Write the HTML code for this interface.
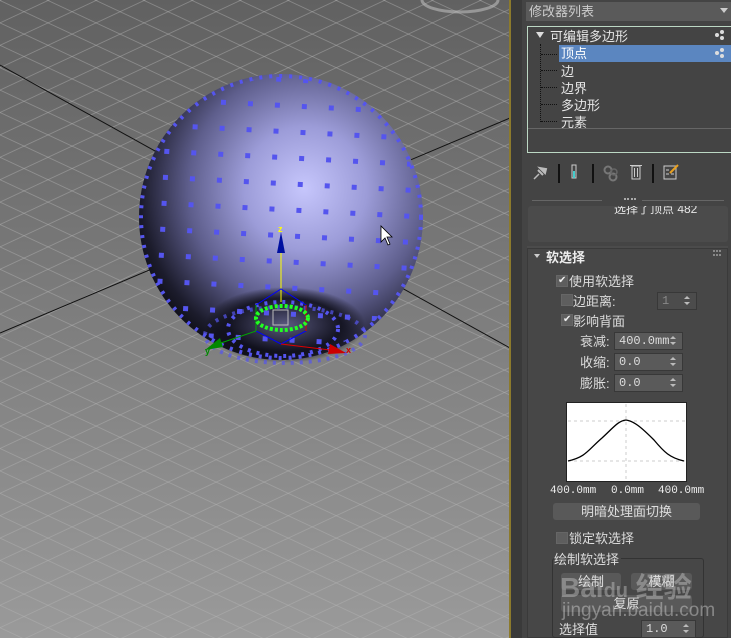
<!DOCTYPE html>
<html><head><meta charset="utf-8">
<style>
*{margin:0;padding:0;box-sizing:border-box}
body{width:731px;height:638px;overflow:hidden;background:#444;font-family:"Liberation Sans","Noto Sans CJK SC",sans-serif;font-size:12px;color:#ddd;position:relative}
.a{position:absolute;white-space:nowrap}
.cb{position:absolute;width:12px;height:12px;background:#5e5e5e;border:1px solid #666}
.ck{color:#eee;font-size:10px;line-height:10px;position:absolute;left:1px;top:0}
.sp{position:absolute;height:18px;background:#5a5a5a;border:1px solid #383838;color:#ddd;font-family:"Liberation Mono",monospace;font-size:12px;line-height:16px;padding-left:4px}
.sp:after{content:"";position:absolute;right:6px;top:3px;border:3px solid transparent;border-bottom:3px solid #bbb;border-top:0}
.sp:before{content:"";position:absolute;right:6px;top:9px;border:3px solid transparent;border-top:3px solid #bbb;border-bottom:0}
.btn{position:absolute;height:17px;background:#595959;border-radius:3px;color:#ddd;text-align:center;line-height:17px;font-size:13px}
</style></head><body>
<svg class="a" style="left:0;top:0" width="510" height="638" viewBox="0 0 510 638">
<defs>
<linearGradient id="bg" x1="0" y1="0" x2="0" y2="1"><stop offset="0" stop-color="#616161"/><stop offset="1" stop-color="#9a9a9a"/></linearGradient>
<pattern id="g1" width="48" height="22.4" patternUnits="userSpaceOnUse" patternTransform="skewY(25)"><line x1="0" y1="0.5" x2="48" y2="0.5" stroke="#b4b4b4" stroke-width="1"/></pattern>
<pattern id="g2" width="48" height="22.4" patternUnits="userSpaceOnUse" patternTransform="skewY(-25)"><line x1="0" y1="0.5" x2="48" y2="0.5" stroke="#b4b4b4" stroke-width="1"/></pattern>
<radialGradient id="sph" cx="0.6" cy="0.4" r="0.72" fx="0.58" fy="0.4"><stop offset="0" stop-color="#c6c6fc"/><stop offset="0.3" stop-color="#9c9cd8"/><stop offset="0.58" stop-color="#5e5e8c"/><stop offset="0.82" stop-color="#1c1c2c"/><stop offset="1" stop-color="#000"/></radialGradient>
<radialGradient id="bot" cx="0.5" cy="0.5" r="0.5"><stop offset="0" stop-color="#5a5a80"/><stop offset="0.7" stop-color="#10101c" stop-opacity="0.9"/><stop offset="1" stop-color="#000" stop-opacity="0"/></radialGradient>
<pattern id="dots" width="27" height="26" patternUnits="userSpaceOnUse" patternTransform="rotate(3)"><rect x="10" y="10" width="5" height="5" fill="#5555ee"/></pattern>
<clipPath id="cc"><ellipse cx="281" cy="217" rx="140" ry="140"/></clipPath>
</defs>
<rect width="510" height="638" fill="url(#bg)"/>
<rect width="510" height="638" fill="url(#g1)" opacity="0.45"/>
<rect width="510" height="638" fill="url(#g2)" opacity="0.45"/>
<line x1="0" y1="65" x2="510" y2="348" stroke="#111" stroke-width="1"/>
<line x1="510" y1="118" x2="0" y2="333" stroke="#111" stroke-width="1"/>
<ellipse cx="460" cy="0" rx="38" ry="12" fill="none" stroke="#bbb" stroke-width="3" opacity="0.6"/>
<ellipse cx="281" cy="217" rx="142" ry="143" fill="url(#sph)"/>
<ellipse cx="285" cy="325" rx="80" ry="38" fill="url(#bot)"/>
<g clip-path="url(#cc)"><rect x="130" y="70" width="310" height="300" fill="url(#dots)"/></g>
<ellipse cx="281" cy="217" rx="140" ry="141" fill="none" stroke="#5555ee" stroke-width="4" stroke-dasharray="3 7"/>
<ellipse cx="283" cy="329" rx="55" ry="27" fill="none" stroke="#5555ee" stroke-width="4" stroke-dasharray="3 6"/>
<ellipse cx="285" cy="335" rx="80" ry="28" fill="none" stroke="#5555ee" stroke-width="4" stroke-dasharray="3 6" opacity="0.7"/>
<line x1="281" y1="252" x2="281" y2="302" stroke="#ff0" stroke-width="1"/>
<polygon points="281,232 277,253 285,253" fill="#0010a0"/>
<text x="278" y="232" fill="#ff0" font-size="9" font-weight="bold" font-family="Liberation Sans">z</text>
<polyline points="256,305 281,289 306,305 306,331 281,344 256,331 256,305" fill="none" stroke="#00f"/>
<line x1="281" y1="344" x2="330" y2="350" stroke="#d00"/>
<line x1="256" y1="331" x2="215" y2="345" stroke="#0a0"/>
<line x1="306" y1="305" x2="306" y2="331" stroke="#d00"/>
<line x1="256" y1="305" x2="256" y2="331" stroke="#0a0"/>
<polygon points="330,344 346,353 328,354" fill="#c00"/>
<text x="346" y="353" fill="#c00" font-size="9" font-weight="bold">x</text>
<polygon points="220,338 205,350 223,347" fill="#080"/>
<text x="205" y="354" fill="#080" font-size="9" font-weight="bold">y</text>
<ellipse cx="282" cy="318" rx="26" ry="12" fill="none" stroke="#2f2" stroke-width="4" stroke-dasharray="3 2"/>
<rect x="273" y="310" width="15" height="15" fill="none" stroke="#bbb" stroke-width="1"/>
<path d="M381 226 L381 242 L385 238 L388 245 L390 244 L387 237 L392 237 Z" fill="#fff" stroke="#000" stroke-width="0.8"/>
</svg>
<div class="a" style="left:509px;top:0;width:2px;height:638px;background:#8c7a2c"></div>
<div class="a" style="left:511px;top:0;width:11px;height:638px;background:#3a3a3a"></div>
<!-- panel -->
<div class="a" style="left:526px;top:2px;width:205px;height:19px;background:#5a5a5a;color:#ccc;font-size:13px;line-height:19px;padding-left:3px">修改器列表</div>
<div class="a" style="left:720px;top:8px;border:4px solid transparent;border-top:5px solid #ccc"></div>
<div class="a" style="left:527px;top:26px;width:204px;height:127px;border:1px solid #bcd8c4;border-right:none;background:#444"></div>
<div class="a" style="left:536px;top:32px;border:4px solid transparent;border-top:6px solid #ddd"></div>
<div class="a" style="left:550px;top:26px;font-size:13px;color:#e6e6e6">可编辑多边形</div>
<div class="a" style="left:559px;top:45px;width:172px;height:17px;background:#5b86c0"></div>
<div class="a" style="left:561px;top:43px;font-size:13px;color:#fff">顶点</div>
<div class="a" style="left:561px;top:61px;font-size:13px;color:#e6e6e6">边</div>
<div class="a" style="left:561px;top:78px;font-size:13px;color:#e6e6e6">边界</div>
<div class="a" style="left:561px;top:95px;font-size:13px;color:#e6e6e6">多边形</div>
<div class="a" style="left:561px;top:112px;font-size:13px;color:#e6e6e6">元素</div>
<div class="a" style="left:540px;top:44px;width:1px;height:78px;border-left:1px dotted #111"></div>
<div class="a" style="left:541px;top:54px;width:16px;border-top:1px dotted #111"></div>
<div class="a" style="left:541px;top:70px;width:16px;border-top:1px dotted #111"></div>
<div class="a" style="left:541px;top:87px;width:16px;border-top:1px dotted #111"></div>
<div class="a" style="left:541px;top:104px;width:16px;border-top:1px dotted #111"></div>
<div class="a" style="left:541px;top:121px;width:16px;border-top:1px dotted #111"></div>
<div class="a" style="left:528px;top:128px;width:203px;height:1px;background:#666"></div>
<svg class="a" style="left:713px;top:29px" width="14" height="36"><g fill="#ddd"><circle cx="9" cy="3" r="2"/><circle cx="4" cy="6" r="2"/><circle cx="9" cy="9" r="2"/><circle cx="9" cy="21" r="2"/><circle cx="4" cy="24" r="2"/><circle cx="9" cy="27" r="2"/></g></svg>
<svg class="a" style="left:530px;top:160px" width="150" height="26">
<path d="M4 19 L9 14" stroke="#bbb" stroke-width="1.5"/><path d="M8 10 L13 15 M10 8 L15 13 L16 9 Z" stroke="#bbb" stroke-width="2" fill="#bbb"/>
<rect x="28" y="4" width="2" height="19" fill="#111"/>
<rect x="42" y="5" width="4" height="13" fill="none" stroke="#ccc"/><rect x="43" y="11" width="2" height="7" fill="#4cc"/>
<rect x="62" y="4" width="2" height="19" fill="#111"/>
<circle cx="78" cy="10" r="3.5" fill="none" stroke="#777" stroke-width="2"/><circle cx="83" cy="17" r="3.5" fill="none" stroke="#777" stroke-width="2"/><circle cx="84" cy="12" r="3" fill="none" stroke="#666" stroke-width="1.5"/>
<rect x="102" y="6" width="8" height="13" fill="none" stroke="#ccc"/><rect x="100" y="5" width="12" height="1" fill="#ccc"/><rect x="104" y="8" width="1" height="9" fill="#ccc"/><rect x="107" y="8" width="1" height="9" fill="#ccc"/>
<rect x="122" y="4" width="2" height="19" fill="#111"/>
<rect x="134" y="6" width="12" height="13" fill="none" stroke="#ccc"/><path d="M136 10 h3 M136 14 h3 M141 14 h3" stroke="#ccc"/><path d="M140 13 L148 5" stroke="#e8a020" stroke-width="2"/>
</svg>
<div class="a" style="left:532px;top:200px;width:70px;height:1px;background:#666"></div>
<div class="a" style="left:642px;top:200px;width:82px;height:1px;background:#666"></div>
<div class="a" style="left:624px;top:198px;width:12px;border-top:2px dotted #aaa"></div>
<div class="a" style="left:528px;top:206px;width:200px;height:36px;background:#4b4b4b;border-radius:3px;overflow:hidden"><div class="a" style="left:86px;top:-6px;font-size:12px;color:#e6e6e6">选择了顶点 482</div></div>
<div class="a" style="left:527px;top:246px;width:201px;height:4px;background:#4b4b4b"></div>
<div class="a" style="left:527px;top:248px;width:201px;height:390px;background:#474747;border:1px solid #3a3a3a"></div>
<div class="a" style="left:534px;top:254px;border:3px solid transparent;border-top:4px solid #ccc"></div>
<div class="a" style="left:546px;top:247px;font-size:13px;font-weight:bold;color:#eee">软选择</div>
<div class="a" style="left:713px;top:250px;width:8px;border-top:2px dotted #888"></div>
<div class="a" style="left:713px;top:254px;width:8px;border-top:2px dotted #888"></div>
<div class="cb" style="left:556px;top:275px"><span class="ck">✔</span></div>
<div class="a" style="left:569px;top:271px;font-size:13px">使用软选择</div>
<div class="cb" style="left:561px;top:294px"></div>
<div class="a" style="left:573px;top:291px;font-size:13px">边距离:</div>
<div class="sp" style="left:657px;top:292px;width:40px;color:#888;background:#4c4c4c">1</div>
<div class="cb" style="left:561px;top:314px"><span class="ck">✔</span></div>
<div class="a" style="left:573px;top:311px;font-size:13px">影响背面</div>
<div class="a" style="left:580px;top:331px;font-size:13px">衰减:</div>
<div class="sp" style="left:614px;top:332px;width:69px">400.0mm</div>
<div class="a" style="left:580px;top:352px;font-size:13px">收缩:</div>
<div class="sp" style="left:614px;top:353px;width:69px">0.0</div>
<div class="a" style="left:580px;top:373px;font-size:13px">膨胀:</div>
<div class="sp" style="left:614px;top:374px;width:69px">0.0</div>
<svg class="a" style="left:566px;top:402px" width="121" height="80">
<rect x="0.5" y="0.5" width="120" height="79" fill="#fff" stroke="#222"/>
<line x1="2" y1="19" x2="119" y2="19" stroke="#ccc" stroke-dasharray="3 3"/>
<line x1="2" y1="59" x2="119" y2="59" stroke="#ccc" stroke-dasharray="3 3"/>
<line x1="60" y1="2" x2="60" y2="78" stroke="#ccc" stroke-dasharray="3 3"/>
<path d="M2 59 C20 55 22 48 36 36 C48 25 52 19 60 18 C68 19 76 26 88 38 C98 50 104 56 118 59" fill="none" stroke="#000" stroke-width="1.3"/>
</svg>
<div class="a" style="left:550px;top:485px;font-family:'Liberation Mono',monospace;font-size:11px;color:#eee">400.0mm</div>
<div class="a" style="left:611px;top:485px;font-family:'Liberation Mono',monospace;font-size:11px;color:#eee">0.0mm</div>
<div class="a" style="left:658px;top:485px;font-family:'Liberation Mono',monospace;font-size:11px;color:#eee">400.0mm</div>
<div class="btn" style="left:553px;top:503px;width:147px">明暗处理面切换</div>
<div class="cb" style="left:556px;top:532px"></div>
<div class="a" style="left:569px;top:528px;font-size:13px">锁定软选择</div>
<div class="a" style="left:552px;top:558px;width:152px;height:80px;border:1px solid #333;border-radius:3px"></div>
<div class="a" style="left:554px;top:549px;font-size:13px;background:#474747;padding-right:2px">绘制软选择</div>
<div class="btn" style="left:561px;top:573px;width:60px">绘制</div>
<div class="btn" style="left:631px;top:573px;width:61px">模糊</div>
<div class="btn" style="left:561px;top:595px;width:131px">复原</div>
<div class="a" style="left:559px;top:619px;font-size:13px">选择值</div>
<div class="sp" style="left:641px;top:620px;width:55px">1.0</div>
<div class="a" style="left:560px;top:566px;font-size:28px;font-weight:bold;color:rgba(230,230,230,0.35)">Bai<span style="font-size:20px">du</span> 经验</div>
<div class="a" style="left:562px;top:600px;font-size:19px;color:rgba(230,230,230,0.4)">jingyan.baidu.com</div>
</body></html>
